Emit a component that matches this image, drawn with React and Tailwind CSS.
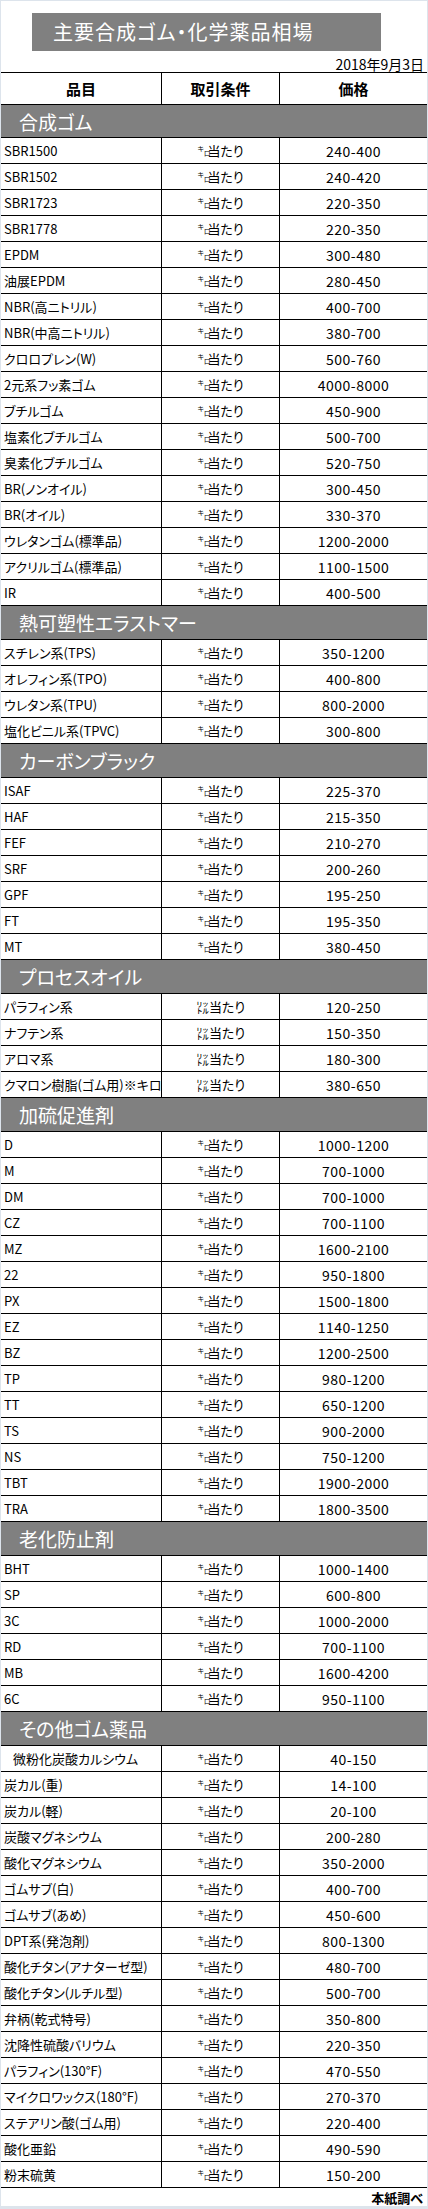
import React from "react";

const sections = [
  {
    title: "合成ゴム",
    unit: "kg",
    rows: [
      ["SBR1500", "240-400"],
      ["SBR1502", "240-420"],
      ["SBR1723", "220-350"],
      ["SBR1778", "220-350"],
      ["EPDM", "300-480"],
      ["油展EPDM", "280-450"],
      ["NBR(高ニトリル)", "400-700"],
      ["NBR(中高ニトリル)", "380-700"],
      ["クロロプレン(W)", "500-760"],
      ["2元系フッ素ゴム", "4000-8000"],
      ["ブチルゴム", "450-900"],
      ["塩素化ブチルゴム", "500-700"],
      ["臭素化ブチルゴム", "520-750"],
      ["BR(ノンオイル)", "300-450"],
      ["BR(オイル)", "330-370"],
      ["ウレタンゴム(標準品)", "1200-2000"],
      ["アクリルゴム(標準品)", "1100-1500"],
      ["IR", "400-500"],
    ],
  },
  {
    title: "熱可塑性エラストマー",
    unit: "kg",
    rows: [
      ["スチレン系(TPS)", "350-1200"],
      ["オレフィン系(TPO)", "400-800"],
      ["ウレタン系(TPU)", "800-2000"],
      ["塩化ビニル系(TPVC)", "300-800"],
    ],
  },
  {
    title: "カーボンブラック",
    unit: "kg",
    rows: [
      ["ISAF", "225-370"],
      ["HAF", "215-350"],
      ["FEF", "210-270"],
      ["SRF", "200-260"],
      ["GPF", "195-250"],
      ["FT", "195-350"],
      ["MT", "380-450"],
    ],
  },
  {
    title: "プロセスオイル",
    unit: "l",
    rows: [
      ["パラフィン系", "120-250"],
      ["ナフテン系", "150-350"],
      ["アロマ系", "180-300"],
      ["クマロン樹脂(ゴム用)※キロ", "380-650"],
    ],
  },
  {
    title: "加硫促進剤",
    unit: "kg",
    rows: [
      ["D", "1000-1200"],
      ["M", "700-1000"],
      ["DM", "700-1000"],
      ["CZ", "700-1100"],
      ["MZ", "1600-2100"],
      ["22", "950-1800"],
      ["PX", "1500-1800"],
      ["EZ", "1140-1250"],
      ["BZ", "1200-2500"],
      ["TP", "980-1200"],
      ["TT", "650-1200"],
      ["TS", "900-2000"],
      ["NS", "750-1200"],
      ["TBT", "1900-2000"],
      ["TRA", "1800-3500"],
    ],
  },
  {
    title: "老化防止剤",
    unit: "kg",
    rows: [
      ["BHT", "1000-1400"],
      ["SP", "600-800"],
      ["3C", "1000-2000"],
      ["RD", "700-1100"],
      ["MB", "1600-4200"],
      ["6C", "950-1100"],
    ],
  },
  {
    title: "その他ゴム薬品",
    unit: "kg",
    rows: [
      ["微粉化炭酸カルシウム", "40-150", true],
      ["炭カル(重)", "14-100"],
      ["炭カル(軽)", "20-100"],
      ["炭酸マグネシウム", "200-280"],
      ["酸化マグネシウム", "350-2000"],
      ["ゴムサブ(白)", "400-700"],
      ["ゴムサブ(あめ)", "450-600"],
      ["DPT系(発泡剤)", "800-1300"],
      ["酸化チタン(アナターゼ型)", "480-700"],
      ["酸化チタン(ルチル型)", "500-700"],
      ["弁柄(乾式特号)", "350-800"],
      ["沈降性硫酸バリウム", "220-350"],
      ["パラフィン(130°F)", "470-550"],
      ["マイクロワックス(180°F)", "270-370"],
      ["ステアリン酸(ゴム用)", "220-400"],
      ["酸化亜鉛", "490-590"],
      ["粉末硫黄", "150-200"],
    ],
  },
];

function Kiro() {
  return (
    <span className="inline-flex h-[12px] w-[10px] justify-between text-[7px] leading-none align-[-1px]">
      <span className="self-start">キ</span>
      <span className="self-end">ロ</span>
    </span>
  );
}

function Unit({ unit }) {
  return (
    <span className="inline-flex items-center">
      {unit === "kg" ? <Kiro /> : <span>㍑</span>}
      <span>当たり</span>
    </span>
  );
}

function Row({ name, price, unit, indent }) {
  return (
    <div className="grid h-[26px] grid-cols-[161px_118px_147px] border-b border-black text-[13px] leading-none text-black">
      <div
        className={
          "flex items-center whitespace-nowrap border-r border-black " +
          (indent ? "pl-[12px]" : "pl-[3px]")
        }
      >
        {name}
      </div>
      <div className="flex items-center justify-center border-r border-black">
        <Unit unit={unit} />
      </div>
      <div className="flex items-center justify-center text-[14px] tracking-[0.5px]">{price}</div>
    </div>
  );
}

export default function App() {
  return (
    <div className="w-[428px] bg-[#dde4ec] px-px pt-px pb-[3px] [font-family:'Noto_Sans_CJK_JP','Noto_Sans',sans-serif] [font-feature-settings:'palt']">
      <div className="w-[426px] bg-white">
        <div className="flex h-[72px] flex-col border-b border-black">
          <div className="ml-[31px] mt-[12px] flex h-[38px] w-[349px] items-center bg-[#808080] pl-[21px] text-[20px] leading-none tracking-[1px] text-white">
            主要合成ゴム・化学薬品相場
          </div>
          <div className="flex h-[21px] items-end justify-end pb-[1px] pr-[3px] text-[14px] leading-none text-black">
            2018年9月3日
          </div>
        </div>
        <div className="grid h-[32px] grid-cols-[161px_118px_147px] border-b border-black text-[15px] font-bold leading-none text-black">
          <div className="flex items-center justify-center border-r border-black">品目</div>
          <div className="flex items-center justify-center border-r border-black">取引条件</div>
          <div className="flex items-center justify-center">価格</div>
        </div>
        {sections.map((s, i) => (
          <div key={s.title}>
            <div
              className={
                "flex items-center border-b border-black bg-[#808080] pl-[18px] text-[19px] leading-none text-white " +
                (i === 0 ? "h-[33px]" : "h-[34px]")
              }
            >
              {s.title}
            </div>
            {s.rows.map(([n, p, ind]) => (
              <Row key={n} name={n} price={p} unit={s.unit} indent={ind} />
            ))}
          </div>
        ))}
        <div className="flex h-[18px] items-center justify-end pr-[4px] text-[13px] font-bold leading-none text-black">
          本紙調べ
        </div>
      </div>
    </div>
  );
}
